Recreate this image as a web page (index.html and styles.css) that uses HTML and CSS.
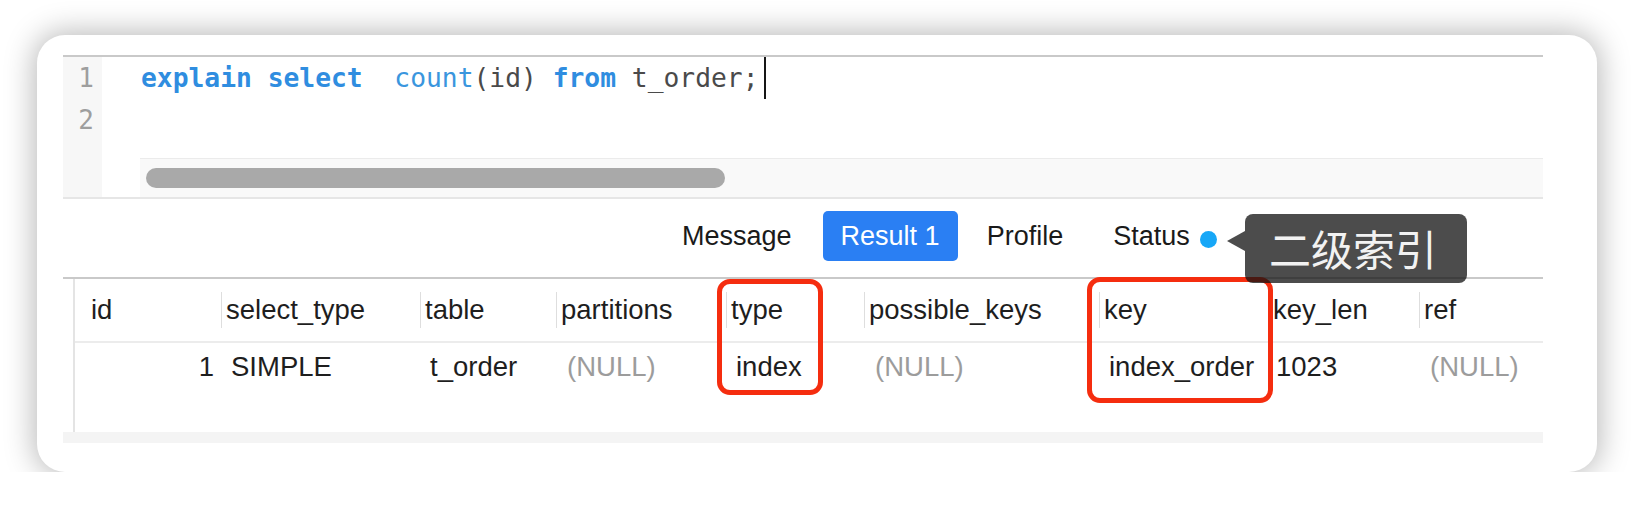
FILE: index.html
```html
<!DOCTYPE html>
<html lang="zh-CN">
<head>
<meta charset="utf-8">
<title>explain</title>
<link rel="stylesheet" href="styles.css">
</head>
<body>
<div class="card">
  <div class="panel">
    <div class="editor">
      <div class="gutter">
        <div class="ln">1</div>
        <div class="ln">2</div>
      </div>
      <div class="code-col">
        <div class="lines">
          <div class="line"><span class="kw">explain</span> <span class="kw">select</span>  <span class="fn">count</span>(id) <span class="kw">from</span> t_order;<span class="caret"></span></div>
          <div class="line"></div>
        </div>
        <div class="hscroll"><div class="thumb"></div></div>
      </div>
    </div>

    <div class="tabs">
      <span class="tab tab-message">Message</span>
      <span class="tab tab-active">Result 1</span>
      <span class="tab tab-profile">Profile</span>
      <span class="tab tab-status">Status</span>
      <span class="dot"></span>
      <div class="tooltip">二级索引</div>
    </div>

    <div class="results">
      <div class="grid-wrap">
        <div class="thead">
          <div class="th th-first">id</div>
          <div class="th">select_type</div>
          <div class="th">table</div>
          <div class="th">partitions</div>
          <div class="th">type</div>
          <div class="th">possible_keys</div>
          <div class="th">key</div>
          <div class="th">key_len</div>
          <div class="th">ref</div>
        </div>
        <div class="trow">
          <div class="td td-num">1</div>
          <div class="td">SIMPLE</div>
          <div class="td">t_order</div>
          <div class="td td-null">(NULL)</div>
          <div class="td">index</div>
          <div class="td td-null">(NULL)</div>
          <div class="td">index_order</div>
          <div class="td td-tight">1023</div>
          <div class="td td-null">(NULL)</div>
        </div>
      </div>
      <div class="hbar"></div>
      <div class="mark mark-type"></div>
      <div class="mark mark-key"></div>
    </div>
  </div>
</div>
</body>
</html>
```

FILE: styles.css
```css
html, body {
  margin: 0;
  padding: 0;
  background: #ffffff;
}

body {
  font-family: "Liberation Sans", Arial, sans-serif;
  color: #1c1c1c;
  padding: 35px 0 0 37px;
}

.card {
  width: 1560px;
  height: 437px;
  box-sizing: border-box;
  background: #ffffff;
  border-radius: 28px;
  box-shadow: 0 0 30px 3px rgba(0, 0, 0, 0.28);
  padding: 20px 54px 0 26px;
}

.panel {
  width: 1480px;
}

/* ---------- editor ---------- */
.editor {
  display: flex;
  border-top: 2px solid #c9c9c9;
  border-bottom: 2px solid #e6e6e6;
  height: 144px;
  box-sizing: border-box;
}

.gutter {
  width: 39px;
  background: #f7f7f7;
  font-family: "DejaVu Sans Mono", monospace;
  font-size: 26px;
  color: #9e9e9e;
}

.ln {
  height: 42px;
  line-height: 42px;
  text-align: right;
  padding-right: 8px;
}

.code-col {
  flex: 1;
  display: flex;
  flex-direction: column;
}

.lines {
  padding-left: 39px;
  font-family: "DejaVu Sans Mono", monospace;
  font-size: 26.3px;
  color: #4a4a4a;
}

.line {
  height: 42px;
  line-height: 42px;
  white-space: pre;
}

.kw {
  color: #2f8de0;
  font-weight: bold;
}

.fn {
  color: #3a96de;
}

.caret {
  display: inline-block;
  width: 2px;
  height: 42px;
  background: #161616;
  vertical-align: top;
  margin-left: 5px;
}

.hscroll {
  margin-top: 17px;
  margin-left: 38px;
  height: 39px;
  box-sizing: border-box;
  border-top: 1px solid #ebebeb;
  background: #f9f9f9;
  padding: 9px 0 0 6px;
}

.thumb {
  width: 579px;
  height: 20px;
  border-radius: 10px;
  background: #a9a9a9;
}

/* ---------- tabs ---------- */
.tabs {
  position: relative;
  height: 78px;
  box-sizing: border-box;
  display: flex;
  align-items: center;
  padding-left: 619px;
  padding-bottom: 4px;
  font-size: 27px;
  color: #1a1a1a;
}

.tab {
  line-height: 50px;
}

.tab-active {
  margin-left: 31px;
  height: 50px;
  padding: 0 18px;
  background: #2a7ff3;
  color: #ffffff;
  border-radius: 5px;
}

.tab-profile {
  margin-left: 29px;
}

.tab-status {
  margin-left: 50px;
}

.dot {
  width: 17px;
  height: 17px;
  border-radius: 50%;
  background: #17a7f7;
  margin-left: 10px;
  margin-top: 6px;
}

.tooltip {
  position: absolute;
  left: 1182px;
  top: 15px;
  width: 222px;
  height: 69px;
  box-sizing: border-box;
  padding-left: 24px;
  border-radius: 8px;
  background: rgba(20, 20, 20, 0.76);
  color: #f2f2f2;
  font-family: "Noto Sans CJK SC", "Noto Sans", sans-serif;
  font-size: 42px;
  line-height: 67px;
  z-index: 5;
}

.tooltip::before {
  content: "";
  position: absolute;
  left: -18px;
  top: 17px;
  border-right: 18px solid rgba(20, 20, 20, 0.76);
  border-top: 10px solid transparent;
  border-bottom: 10px solid transparent;
}

/* ---------- results ---------- */
.results {
  position: relative;
  border-top: 2px solid #c9c9c9;
}

.grid-wrap {
  margin-left: 10px;
  border-left: 2px solid #e4e4e4;
  height: 153px;
}

.thead,
.trow {
  display: grid;
  grid-template-columns: 146px 199px 136px 170px 138px 235px 169px 151px 124px;
  font-size: 27.5px;
  color: #1e1e1e;
}

.thead {
  height: 62px;
  align-items: center;
  border-bottom: 2px solid #ececec;
}

.th {
  height: 36px;
  line-height: 36px;
  border-left: 1px solid #dedede;
  padding-left: 4px;
  white-space: nowrap;
}

.th-first {
  border-left: none;
  padding-left: 16px;
}

.trow {
  height: 48px;
  align-items: center;
}

.td {
  padding-left: 10px;
  white-space: nowrap;
}

.td-num {
  text-align: right;
  padding-right: 7px;
}

.td-tight {
  padding-left: 8px;
}

.td-null {
  color: #9c9c9c;
  padding-left: 11px;
}

.hbar {
  height: 11px;
  background: #f4f4f4;
}

.mark {
  position: absolute;
  box-sizing: border-box;
  border: 5px solid #f52d0f;
  border-radius: 13px;
  z-index: 3;
}

.mark-type {
  left: 654px;
  top: 0;
  width: 106px;
  height: 116px;
}

.mark-key {
  left: 1024px;
  top: -2px;
  width: 186px;
  height: 126px;
}
```
